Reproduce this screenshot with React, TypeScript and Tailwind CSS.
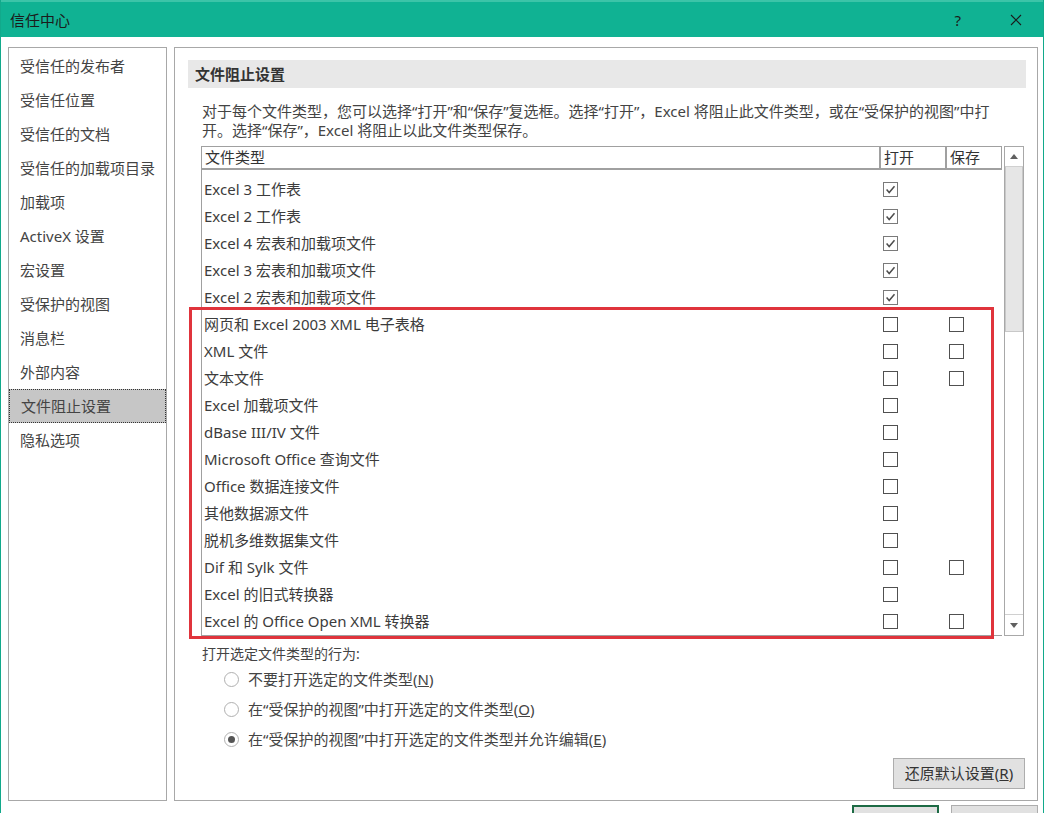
import React from 'react';

const navItems = [
  '受信任的发布者',
  '受信任位置',
  '受信任的文档',
  '受信任的加载项目录',
  '加载项',
  'ActiveX 设置',
  '宏设置',
  '受保护的视图',
  '消息栏',
  '外部内容',
  '文件阻止设置',
  '隐私选项',
];

type Row = { name: string; open: 'checked' | 'empty'; save: 'empty' | null };

const rows: Row[] = [
  { name: 'Excel 3 工作表', open: 'checked', save: null },
  { name: 'Excel 2 工作表', open: 'checked', save: null },
  { name: 'Excel 4 宏表和加载项文件', open: 'checked', save: null },
  { name: 'Excel 3 宏表和加载项文件', open: 'checked', save: null },
  { name: 'Excel 2 宏表和加载项文件', open: 'checked', save: null },
  { name: '网页和 Excel 2003 XML 电子表格', open: 'empty', save: 'empty' },
  { name: 'XML 文件', open: 'empty', save: 'empty' },
  { name: '文本文件', open: 'empty', save: 'empty' },
  { name: 'Excel 加载项文件', open: 'empty', save: null },
  { name: 'dBase III/IV 文件', open: 'empty', save: null },
  { name: 'Microsoft Office 查询文件', open: 'empty', save: null },
  { name: 'Office 数据连接文件', open: 'empty', save: null },
  { name: '其他数据源文件', open: 'empty', save: null },
  { name: '脱机多维数据集文件', open: 'empty', save: null },
  { name: 'Dif 和 Sylk 文件', open: 'empty', save: 'empty' },
  { name: 'Excel 的旧式转换器', open: 'empty', save: null },
  { name: 'Excel 的 Office Open XML 转换器', open: 'empty', save: 'empty' },
];

function CheckBox({ checked }: { checked?: boolean }) {
  return (
    <span
      className={`flex h-[15px] w-[15px] items-center justify-center border bg-white ${
        checked ? 'border-[#7a7a7a]' : 'border-[#505050]'
      }`}
    >
      {checked && (
        <svg viewBox="0 0 13 13" className="h-[13px] w-[13px]">
          <path d="M2.6 6.6l2.6 3 5.3-6.4" fill="none" stroke="#4d4d4d" strokeWidth="1.5" />
        </svg>
      )}
    </span>
  );
}

function Radio({ checked }: { checked?: boolean }) {
  return (
    <span className="flex h-[15px] w-[15px] items-center justify-center rounded-full border border-[#b0b0b0] bg-white">
      {checked && <span className="h-[7px] w-[7px] rounded-full bg-[#555]" />}
    </span>
  );
}

export default function App() {
  return (
    <div className="h-[813px] w-[1047px] overflow-hidden bg-white font-['Noto_Sans','Noto_Sans_CJK_SC',sans-serif]">
      <div className="h-[813px] w-[1044px] border-x border-[#12a98b] bg-white">
        {/* Title bar */}
        <div className="flex h-[37px] items-center border-t-2 border-[#3cc4a8] bg-[#10b293] pl-[9px]">
          <span className="text-[15px] leading-[20px] text-[#1b1b1b]">信任中心</span>
          <span className="ml-auto mr-[49px] text-[15px] leading-[20px] text-[#1b1b1b]">?</span>
          <svg viewBox="0 0 12 12" className="mr-[21px] h-[12px] w-[12px]">
            <path d="M1 1l10 10M11 1L1 11" stroke="#1b1b1b" strokeWidth="1.1" />
          </svg>
        </div>

        {/* Body */}
        <div className="flex gap-[7px] pl-[7px] pr-[5px] pt-[10px]">
          {/* Left navigation */}
          <div className="h-[754px] w-[159px] shrink-0 border border-[#a8a8a8] pt-px">
            {navItems.map((item) => {
              const selected = item === '文件阻止设置';
              return (
                <div
                  key={item}
                  className={`flex h-[34px] items-center pl-[11px] text-[15px] text-[#444] ${
                    selected ? 'border border-dotted border-[#333] bg-[#c6c6c6] pl-[10px] text-[#222]' : ''
                  }`}
                >
                  {item}
                </div>
              );
            })}
          </div>

          {/* Right content */}
          <div className="relative h-[754px] flex-1 border border-[#a8a8a8] pl-[13px] pr-[11px] pt-[12px]">
            <div className="flex h-[28px] items-center bg-[#e8e8e8] pl-[7px] text-[15px] font-bold text-[#333]">
              文件阻止设置
            </div>

            <div className="mt-[14px] pl-[14px] text-[15px] leading-[19px] text-[#444]">
              <div className="whitespace-nowrap">
                对于每个文件类型，您可以选择“打开”和“保存”复选框。选择“打开”，Excel 将阻止此文件类型，或在“受保护的视图”中打
              </div>
              <div className="whitespace-nowrap">开。选择“保存”，Excel 将阻止以此文件类型保存。</div>
            </div>

            {/* File type list */}
            <div className="ml-[13px] mr-[2px] mt-[6px] flex">
              <div className="flex-1">
                <div className="flex h-[24px] border-b-2 border-l border-t border-[#a0a0a0] text-[15px] text-[#333]">
                  <div className="flex flex-1 items-center border-r-2 border-[#a0a0a0] pl-[3px]">文件类型</div>
                  <div className="flex w-[66px] items-center border-r-2 border-[#a0a0a0] pl-[3px]">打开</div>
                  <div className="flex w-[55px] items-center border-r border-[#a0a0a0] pl-[3px]">保存</div>
                </div>
                <div className="border-b border-l border-[#a0a0a0] pt-[6px]">
                  {rows.map((r) => (
                    <div key={r.name} className="flex h-[27px] items-center text-[15px] text-[#3c3c3c]">
                      <div className="flex-1 pl-[2px]">{r.name}</div>
                      <div className="w-[66px] pl-[2px]">
                        <CheckBox checked={r.open === 'checked'} />
                      </div>
                      <div className="w-[55px] pl-[2px]">{r.save && <CheckBox />}</div>
                    </div>
                  ))}
                </div>
              </div>

              {/* Scrollbar */}
              <div className="ml-[2px] flex w-[20px] flex-col border border-[#a8a8a8] bg-white">
                <div className="flex h-[20px] items-center justify-center border-b border-[#d0d0d0]">
                  <svg viewBox="0 0 8 5" className="h-[5px] w-[8px]">
                    <path d="M0 5L4 0l4 5z" fill="#606060" />
                  </svg>
                </div>
                <div className="h-[165px] border-x border-b border-[#c8c8c8] bg-[#e6e6e6]" />
                <div className="flex-1" />
                <div className="flex h-[21px] items-center justify-center border-t border-[#d0d0d0]">
                  <svg viewBox="0 0 8 5" className="h-[5px] w-[8px]">
                    <path d="M0 0l4 5 4-5z" fill="#606060" />
                  </svg>
                </div>
              </div>
            </div>

            {/* Behaviour options */}
            <div className="mt-[8px] pl-[14px] text-[14px] leading-[20px] text-[#444]">打开选定文件类型的行为:</div>
            <div className="pl-[36px] text-[15px] text-[#444]">
              <div className="flex h-[30px] items-center gap-[9px]">
                <Radio />
                <span>
                  不要打开选定的文件类型(<span className="underline">N</span>)
                </span>
              </div>
              <div className="flex h-[30px] items-center gap-[9px]">
                <Radio />
                <span>
                  在“受保护的视图”中打开选定的文件类型(<span className="underline">O</span>)
                </span>
              </div>
              <div className="flex h-[30px] items-center gap-[9px]">
                <Radio checked />
                <span>
                  在“受保护的视图”中打开选定的文件类型并允许编辑(<span className="underline">E</span>)
                </span>
              </div>
            </div>
            <div className="mr-px mt-[4px] flex justify-end">
              <button className="h-[31px] w-[132px] border border-[#adadad] bg-[#e1e1e1] text-[15px] text-[#333]">
                还原默认设置(<span className="underline">R</span>)
              </button>
            </div>

            {/* Annotation box */}
            <div className="pointer-events-none absolute left-[14px] top-[259px] h-[332px] w-[805px] border-[3px] border-[#e0343c]" />
          </div>
        </div>

        {/* Dialog buttons (cut off) */}
        <div className="mt-[4px] flex justify-end gap-[12px] pr-[5px]">
          <button className="h-[30px] w-[87px] border-2 border-[#1d6b45] bg-[#e1e1e1]" />
          <button className="h-[30px] w-[87px] border border-[#adadad] bg-[#e1e1e1]" />
        </div>
      </div>
    </div>
  );
}
